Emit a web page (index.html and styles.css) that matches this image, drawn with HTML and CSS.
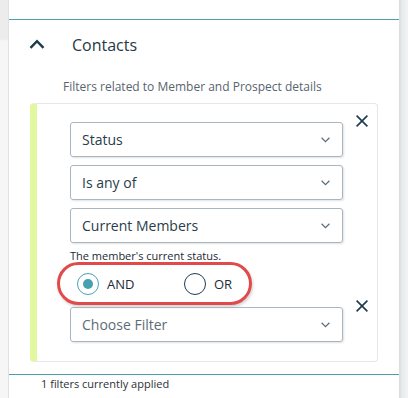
FILE: index.html
```html
<!DOCTYPE html>
<html lang="en">
<head>
  <meta charset="UTF-8">
  <meta name="viewport" content="width=device-width, initial-scale=1.0">
  <title>Contact Filters</title>
  <link rel="stylesheet" href="styles.css">
</head>
<body>

<div class="gutter"></div>

<div class="panel">
  <div class="prev-section"></div>

  <div class="section-head">
    <svg class="collapse" width="16" height="10" viewBox="0 0 16 10">
      <path d="M1.5 8.8 L8 2.2 L14.5 8.8" fill="none" stroke="#1b3a4c" stroke-width="2.4"/>
    </svg>
    <span class="section-title">Contacts</span>
  </div>

  <p class="section-desc">Filters related to Member and Prospect details</p>

  <div class="filter-card">
    <div class="filter-row">
      <div class="fields">
        <div class="select">
          <span>Status</span>
          <svg width="9" height="6" viewBox="0 0 9 6"><path d="M0.6 0.8 L4.5 4.6 L8.4 0.8" fill="none" stroke="#5a6b79" stroke-width="1.2"/></svg>
        </div>
        <div class="select">
          <span>Is any of</span>
          <svg width="9" height="6" viewBox="0 0 9 6"><path d="M0.6 0.8 L4.5 4.6 L8.4 0.8" fill="none" stroke="#5a6b79" stroke-width="1.2"/></svg>
        </div>
        <div class="select">
          <span>Current Members</span>
          <svg width="9" height="6" viewBox="0 0 9 6"><path d="M0.6 0.8 L4.5 4.6 L8.4 0.8" fill="none" stroke="#5a6b79" stroke-width="1.2"/></svg>
        </div>
        <div class="hint">The member's current status.</div>

        <div class="join-group">
          <label class="option">
            <span class="radio checked"></span>
            <span>AND</span>
          </label>
          <label class="option">
            <span class="radio"></span>
            <span>OR</span>
          </label>
        </div>
      </div>
      <button class="remove" type="button">
        <svg width="12" height="12" viewBox="0 0 12 12"><path d="M0.6 0.6 L11.4 11.4 M11.4 0.6 L0.6 11.4" stroke="#1d3a4e" stroke-width="1.6"/></svg>
      </button>
    </div>

    <div class="filter-row">
      <div class="fields">
        <div class="select placeholder">
          <span>Choose Filter</span>
          <svg width="9" height="6" viewBox="0 0 9 6"><path d="M0.6 0.8 L4.5 4.6 L8.4 0.8" fill="none" stroke="#5a6b79" stroke-width="1.2"/></svg>
        </div>
      </div>
      <button class="remove" type="button">
        <svg width="12" height="12" viewBox="0 0 12 12"><path d="M0.6 0.6 L11.4 11.4 M11.4 0.6 L0.6 11.4" stroke="#1d3a4e" stroke-width="1.6"/></svg>
      </button>
    </div>
  </div>

  <div class="applied">1 filters currently applied</div>
</div>

<div class="edge"></div>

</body>
</html>
```

FILE: styles.css
```css
body {
  font-family: "Open Sans", Arial, sans-serif;
  margin: 0;
  padding: 0;
  display: flex;
  height: 398px;
  overflow: hidden;
  background-color: #f5f5f5;
  color: #1e2e3b;
}

.gutter {
  width: 8px;
  flex-shrink: 0;
  background: linear-gradient(#ececec 0, #ececec 39px, #f6f6f6 41px);
}

.panel {
  width: 390px;
  flex-shrink: 0;
  background-color: #fff;
  border-left: 1px solid #dce3e7;
}

.edge {
  width: 9px;
  flex-shrink: 0;
  background: linear-gradient(to right, #d6dce0, #e9edef 40%, #f2f3f4);
}

.prev-section {
  height: 19px;
  border-bottom: 1px solid #4b9fae;
}

.section-head {
  display: flex;
  align-items: center;
  height: 50px;
  padding-left: 20px;
}

.collapse {
  margin-top: -2px;
}

.section-title {
  margin-left: 27px;
  font-size: 16px;
  color: #263847;
}

.section-desc {
  margin: 8px 0 0 54px;
  font-size: 12px;
  line-height: 18px;
  color: #58646e;
}

.filter-card {
  margin: 7px 0 0 21px;
  width: 340px;
  height: 239px;
  padding-top: 18px;
  border: 1px solid #e4e8ea;
  border-left: 7px solid #e2f8a0;
  border-radius: 4px;
}

.filter-row {
  display: flex;
  padding-left: 33px;
}

.fields {
  width: 273px;
}

.select {
  box-sizing: border-box;
  height: 35px;
  display: flex;
  align-items: center;
  justify-content: space-between;
  padding: 0 12px 0 11px;
  margin-bottom: 8px;
  border: 1px solid #a9b6c0;
  border-radius: 3px;
  box-shadow: 1px 1px 2px rgba(0, 0, 0, 0.12);
  font-size: 14px;
  color: #2a3c4a;
}

.select.placeholder {
  color: #5e6c77;
  margin-bottom: 0;
}

.hint {
  margin-top: -3px;
  font-size: 11px;
  line-height: 15px;
  color: #1c2a34;
}

.join-group {
  box-sizing: border-box;
  display: flex;
  align-items: center;
  width: 195px;
  height: 43px;
  margin: -1px 0 2px -13px;
  padding-left: 17px;
  border: 3px solid #e04a4a;
  border-radius: 22px;
  box-shadow: 1px 2px 3px rgba(0, 0, 0, 0.18);
}

.option {
  display: flex;
  align-items: center;
  gap: 8px;
  font-size: 13px;
  color: #1c2c38;
}

.option:first-child {
  width: 107px;
  flex-shrink: 0;
}

.radio {
  box-sizing: border-box;
  width: 22px;
  height: 22px;
  border-radius: 50%;
  border: 1.5px solid #1f3c52;
  display: flex;
  align-items: center;
  justify-content: center;
}

.radio.checked {
  border-color: #4aa4b4;
}

.radio.checked::after {
  content: "";
  width: 10px;
  height: 10px;
  border-radius: 50%;
  background-color: #45a0b0;
}

.remove {
  align-self: flex-start;
  margin: -7px 0 0 13px;
  padding: 0;
  border: none;
  background: none;
  width: 12px;
  height: 12px;
  cursor: pointer;
  line-height: 0;
}

.applied {
  margin-top: 12px;
  padding: 1px 0 0 32px;
  border-top: 1px solid #4b9fae;
  font-size: 11px;
  line-height: 15px;
  color: #2d3135;
}
```
